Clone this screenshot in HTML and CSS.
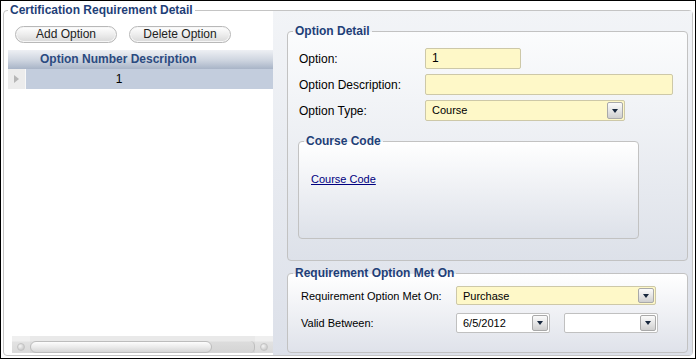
FILE: index.html
```html
<!DOCTYPE html>
<html>
<head>
<meta charset="utf-8">
<link rel="stylesheet" href="styles.css">
</head>
<body>
<div class="frame">
  <fieldset class="main">
    <legend class="lg lg-main">Certification Requirement Detail</legend>
    <div class="main-body">
      <div class="left">
        <div class="btns">
          <button class="btn">Add Option</button>
          <button class="btn">Delete Option</button>
        </div>
        <div class="grid">
          <div class="ghead">Option Number Description</div>
          <div class="grow">
            <div class="sel"><span class="tri"></span></div>
            <div class="cell"><span class="cval">1</span></div>
          </div>
          <div class="gbody"></div>
          <div class="hscroll">
            <div class="sb-end"><span class="dot"></span></div>
            <div class="sb-thumb"></div>
            <div class="sb-track"><span class="cap"></span></div>
            <div class="sb-end"><span class="dot"></span></div>
          </div>
        </div>
      </div>
      <div class="right">
        <fieldset class="box detail">
          <legend class="lg">Option Detail</legend>
          <div class="detail-in">
            <div class="rows">
              <div class="row"><span class="lbl">Option:</span><div class="inp w96">1</div></div>
              <div class="row"><span class="lbl">Option Description:</span><div class="inp w248"></div></div>
              <div class="row"><span class="lbl">Option Type:</span><div class="inp sel-inp w200"><span class="val">Course</span><span class="ddbtn"><span class="ddtri"></span></span></div></div>
            </div>
            <fieldset class="box course">
              <legend class="lg">Course Code</legend>
              <div class="course-in"><a class="link" href="#">Course Code</a></div>
            </fieldset>
          </div>
        </fieldset>
        <fieldset class="box met">
          <legend class="lg">Requirement Option Met On</legend>
          <div class="met-in">
            <div class="row r19"><span class="lbl lbl2">Requirement Option Met On:</span><div class="inp sel-inp w200"><span class="val">Purchase</span><span class="ddbtn"><span class="ddtri"></span></span></div></div>
            <div class="row r20"><span class="lbl lbl2">Valid Between:</span>
              <div class="dates">
                <div class="inp sel-inp date"><span class="val">6/5/2012</span><span class="ddbtn"><span class="ddtri"></span></span></div>
                <div class="inp sel-inp date"><span class="val"></span><span class="ddbtn"><span class="ddtri"></span></span></div>
              </div>
            </div>
          </div>
        </fieldset>
      </div>
    </div>
  </fieldset>
</div>
</body>
</html>
```

FILE: styles.css
```css
* { box-sizing: border-box; }
html, body { margin: 0; padding: 0; }
body {
  width: 696px;
  height: 359px;
  overflow: hidden;
  background: #fff;
  font-family: "Liberation Sans", Arial, sans-serif;
  font-size: 12px;
  color: #000;
}
.frame {
  width: 696px;
  height: 359px;
  border: 1px solid #000;
  display: flex;
  flex-direction: column;
  background: #fff;
}
.main {
  flex: 1;
  margin: 1px 2px 2px 2px;
  padding: 0;
  border: 1px solid #c4c4c4;
  border-radius: 4px;
  min-width: 0;
  min-height: 0;
  display: flex;
  flex-direction: column;
  background: #fff;
}
.lg {
  padding: 0 2px;
  margin-left: 5px;
  font: bold 12px/16px "Liberation Sans", Arial, sans-serif;
  color: #1f3f78;
}
.lg-main { margin-left: 4px; }
.main-body {
  flex: 1;
  display: flex;
  margin-top: -7px;
  min-height: 0;
}
.left {
  width: 269px;
  padding: 15px 0 2px 0;
  display: flex;
  flex-direction: column;
}
.btns { display: flex; gap: 12px; padding-left: 11px; }
.btn {
  width: 102px;
  height: 17px;
  padding: 0;
  border-radius: 9px;
  border: 1px solid #b8b8b8;
  background: linear-gradient(#ffffff, #ededed 50%, #d8d8d8);
  box-shadow: inset 0 0 0 1px #f6f6f6;
  font: 12px/15px "Liberation Sans", Arial, sans-serif;
  color: #222;
  text-align: center;
}
.grid {
  margin: 7px 0 0 4px;
  flex: 1;
  display: flex;
  flex-direction: column;
}
.ghead {
  height: 19px;
  padding-left: 32px;
  background: linear-gradient(#eef0f4, #cdd4df 55%, #a8b4c7);
  font: bold 12px/19px "Liberation Sans", Arial, sans-serif;
  color: #2b4a80;
}
.grow { height: 20px; display: flex; }
.sel {
  width: 18px;
  background: #ececec;
  border-right: 1px solid #f8f8f8;
  display: flex;
  align-items: center;
  justify-content: center;
}
.tri {
  width: 0; height: 0;
  border-left: 5px solid #b6b6b6;
  border-top: 4px solid transparent;
  border-bottom: 4px solid transparent;
}
.cell { flex: 1; background: #c3cddd; line-height: 20px; }
.cval { display: inline-block; width: 186px; text-align: center; }
.gbody { flex: 1; }
.hscroll {
  height: 17px;
  margin-left: 4px;
  display: flex;
  background: linear-gradient(#e9e9e9 0, #e9e9e9 5px, #dcdcdc 6px, #d4d4d4);
}
.sb-end {
  width: 18px;
  display: flex;
  align-items: center;
  justify-content: center;
  padding-top: 4px;
  background: linear-gradient(#efefef 0, #efefef 5px, #e2e2e2 6px, #dadada);
}
.dot {
  width: 8px; height: 8px;
  border-radius: 50%;
  background: radial-gradient(circle at 35% 35%, #f4f4f4, #bdbdbd);
  border: 1px solid #c4c4c4;
}
.sb-thumb {
  width: 182px;
  margin-top: 5px;
  height: 12px;
  border-radius: 6px;
  border: 1px solid #bdbdbd;
  background: linear-gradient(#fdfdfd, #ebebeb 50%, #d6d6d6);
}
.sb-track { flex: 1; display: flex; justify-content: flex-end; padding-top: 5px; }
.cap {
  width: 5px; height: 12px;
  border-right: 1px solid #bdbdbd;
  border-radius: 0 6px 6px 0;
}
.right {
  flex: 1;
  background: linear-gradient(#f2f4f7, #dce0e9);
  padding: 12px 4px 2px 14px;
  display: flex;
  flex-direction: column;
  gap: 4px;
}
.box {
  margin: 0;
  padding: 0;
  border: 1px solid #c2c2c2;
  border-radius: 4px;
  min-width: 0;
}
.detail {
  flex: 1;
  background: linear-gradient(#fbfcfd, #dde1e9);
}
.detail-in { padding: 9px 10px 0 10px; }
.rows { display: flex; flex-direction: column; gap: 5px; }
.row { display: flex; align-items: center; height: 21px; }
.r19 { height: 19px; }
.r20 { height: 20px; }
.lbl { width: 127px; flex: none; padding-left: 1px; }
.lbl2 { width: 155px; font-size: 11px; padding-left: 0; }
.inp {
  height: 100%;
  flex: none;
  border: 1px solid #cdc8a8;
  border-radius: 2px;
  background: #fef8c8;
  padding-left: 6px;
  font-size: 11px;
  line-height: 19px;
}
.w96 { width: 96px; font-size: 12px; }
.w248 { width: 248px; }
.w200 { width: 200px; }
.sel-inp {
  display: flex;
  padding: 1px 1px 1px 6px;
}
.val { flex: 1; line-height: 17px; }
.ddbtn {
  width: 16px;
  border: 1px solid #a9a9a9;
  border-radius: 2px;
  background: linear-gradient(#fbfbfb, #e6e6e6 50%, #cfcfcf);
  display: flex;
  align-items: center;
  justify-content: center;
}
.ddtri {
  width: 0; height: 0;
  border-top: 4px solid #17273d;
  border-left: 3.5px solid transparent;
  border-right: 3.5px solid transparent;
}
.course {
  margin-top: 12px;
  width: 341px;
  height: 106px;
  background: linear-gradient(#ffffff, #dde1e9);
}
.course-in { padding: 23px 0 0 12px; font-size: 11px; line-height: 14px; }
.link { color: #000080; text-decoration: underline; }
.met {
  height: 88px;
  flex: none;
  background: linear-gradient(#ffffff, #dfe2ea);
}
.met-in {
  padding: 5px 0 0 13px;
  display: flex;
  flex-direction: column;
  gap: 8px;
}
.dates { display: flex; gap: 14px; height: 100%; }
.date {
  width: 94px;
  background: #fff;
  border-color: #c0c0c0;
}
```
